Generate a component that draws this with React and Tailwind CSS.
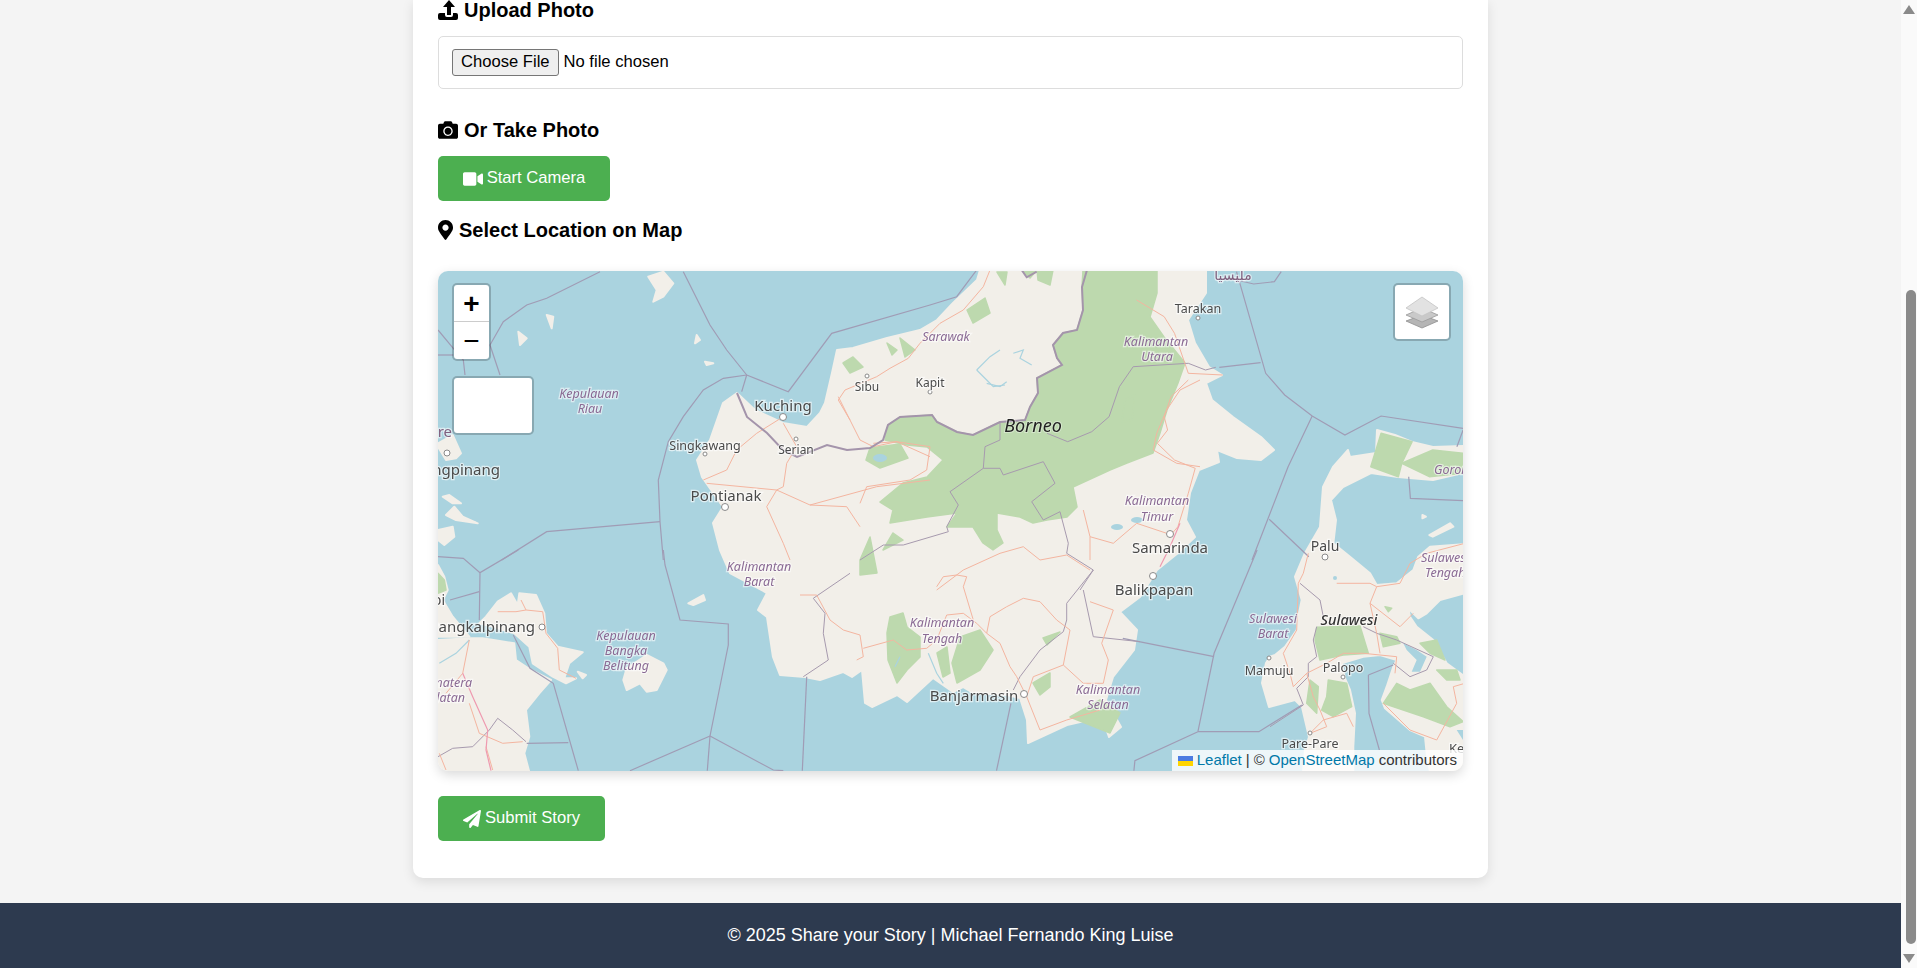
import React from 'react';
import { FaCamera, FaVideo, FaMapMarkerAlt, FaPaperPlane } from 'react-icons/fa';

// crop-space helper: the map was traced on zoomed crops, from an origin in page pixels.
// the crops starting at x=930 came back 2.904x wide instead of 3x
const z = (ox, oy, list) => list.map(([x, y]) => [ox + x / (ox === 930 ? 2.904 : 3), oy + y / 3]);
const str = (list) => list.map(([x, y]) => `${x.toFixed(1)},${y.toFixed(1)}`).join(' ');

const BORNEO = [[737,393],[755,410],[783,423],[807,427],[820,413],[825,403],[832,373],[837,350],[853,348],[887,338],[920,330],[937,320],[953,303],[977,280],[980,270],[1206,270],[1206,293],[1188,320],[1195,343],[1209,367],[1222,375],[1206,383],[1212,400],[1233,417],[1261,437],[1274,450],[1261,460],[1237,458],[1217,450],[1219,462],[1199,470],[1190,493],[1186,520],[1195,537],[1178,553],[1157,570],[1140,597],[1120,612],[1137,630],[1134,650],[1113,677],[1106,700],[1121,727],[1109,737],[1102,717],[1067,725],[1028,743],[1027,720],[1020,698],[1007,695],[973,693],[963,687],[953,692],[933,678],[907,702],[897,695],[872,707],[865,703],[862,670],[852,677],[843,672],[820,680],[805,677],[780,675],[773,657],[767,617],[758,610],[767,593],[730,573],[720,550],[713,523],[723,507],[702,477],[697,460],[710,440],[723,403]];

const SULAWESI = [[1463,446],[1433,447],[1412,442],[1395,435],[1377,430],[1376,453],[1350,457],[1348,450],[1333,467],[1323,487],[1320,527],[1305,553],
  ...z(1270,540,[[75,110],[95,180],[85,230],[80,270],[45,320],[15,345],[0,350]]),
  [1266,663],[1262,683],[1269,707],[1295,700],[1302,707],[1309,737],[1305,750],[1303,772],
  ...z(1270,540,[[250,696],[250,620],[255,520],[240,450],[225,415],[215,370],[280,350],[330,345],[380,360],[370,380],[350,440],[335,480],[345,505],[420,570],[465,590],[470,640],[480,696]]),
  [1463,772],
  ...z(1270,540,[[585,410],[530,370],[490,300],[440,260],[420,230],[415,205],[425,215],[445,235],[470,220],[510,180],[585,160],[585,12],[480,20],[445,50],[430,90],[380,130],[320,135],[300,100],[240,50],[190,10]]),
  [1336,520],[1331,500],[1343,487],[1371,473],[1398,477],[1433,480],[1463,473]];

const LAND = [
  z(436,420,[[6,660],[100,655],[140,655],[235,670],[240,720],[285,750],[345,780],[310,820],[270,870],[280,950],[265,1000],[280,1056],[6,1056]]),
  z(436,420,[[185,545],[225,520],[245,555],[250,520],[300,525],[325,580],[330,640],[365,680],[440,697],[400,730],[385,775],[420,775],[390,790],[350,770],[290,730],[280,680],[235,640],[170,620],[130,610],[150,590]]),
  z(436,420,[[6,435],[25,470],[35,510],[20,540],[50,590],[100,650],[6,650]]),
  z(436,420,[[30,285],[55,260],[80,290],[125,310],[95,305],[60,300]]),
  z(436,420,[[6,330],[50,320],[55,350],[25,375],[6,360]]),
  z(436,420,[[20,230],[40,225],[75,250],[50,250]]),
  z(436,420,[[425,755],[450,765],[440,775]]),
  z(436,420,[[6,70],[50,45],[75,100],[60,115],[30,120],[6,80]]),
  z(430,550,[[590,355],[650,315],[700,340],[710,360],[680,420],[650,425],[630,400],[590,420],[580,390]]),
  z(430,550,[[775,160],[820,135],[825,150],[790,165]]),
  z(430,260,[[655,50],[700,35],[730,70],[700,110],[670,125],[680,90]]),
  z(430,260,[[800,225],[810,240],[795,250]]),
  z(430,260,[[265,215],[290,235],[270,255]]),
  z(430,260,[[350,165],[370,170],[365,205]]),
  z(430,260,[[825,305],[850,310],[830,315]]),
  z(930,260,[[1430,765],[1440,770],[1430,775]]),
  z(930,260,[[1450,825],[1510,790],[1520,800],[1460,830]]),
];

const FOREST = [
  [[1083,270],[1157,270],[1157,293],[1150,317],[1164,337],[1185,363],[1178,383],[1167,410],[1160,433],[1153,453],[1127,463],[1110,470],[1073,487],[1077,507],[1067,517],[1047,520],[1033,523],[1020,517],[997,513],[997,530],[1003,543],[993,550],[983,543],[973,527],[947,527],[957,513],[927,517],[890,523],[893,510],[880,502],[903,483],[927,477],[943,460],[927,447],[907,445],[885,440],[888,425],[900,417],[932,415],[937,422],[957,432],[973,435],[1000,422],[1025,420],[1030,407],[1038,393],[1037,378],[1062,365],[1057,358],[1053,345],[1063,333],[1077,330],[1083,310],[1082,287]],
  [[860,560],[870,537],[877,573],[860,575]],
  [[893,533],[903,540],[883,550]],
  [[890,617],[903,613],[907,627],[920,637],[920,657],[907,670],[897,683],[888,660],[887,633]],
  [[960,637],[980,630],[993,650],[980,670],[957,683],[952,663],[957,647]],
  [[937,653],[947,647],[950,673],[943,677]],
  [[1033,683],[1050,673],[1050,687],[1040,695]],
  [[1070,717],[1100,700],[1120,713],[1110,733]],
  [[1043,638],[1060,632],[1047,645]],
  [[967,310],[985,298],[990,313],[973,323]],
  [[997,272],[1007,272],[1005,285]],
  [[1037,270],[1053,270],[1050,285],[1038,280]],
  [[1022,270],[1037,270],[1030,278]],
  [[853,357],[863,367],[850,373],[843,363]],
  [[887,343],[897,350],[892,355]],
  [[900,338],[915,350],[905,357]],
  [[870,448],[900,444],[908,458],[880,468],[866,460]],
  [[1125,400],[1135,395],[1132,420],[1122,422]],
  z(930,260,[[1280,620],[1310,520],[1400,545],[1370,610],[1360,650]]),
  z(930,260,[[1370,610],[1460,570],[1548,580],[1548,640],[1450,650]]),
  z(1270,540,[[140,262],[270,258],[295,340],[220,345],[150,360],[135,300]]),
  z(1270,540,[[175,420],[230,430],[245,500],[190,530],[155,510],[170,470]]),
  z(1270,540,[[330,280],[380,290],[390,310],[340,320]]),
  z(1270,540,[[450,310],[500,300],[525,360],[480,340]]),
  z(1270,540,[[500,390],[560,390],[570,420],[530,420]]),
  z(1270,540,[[340,490],[380,430],[420,450],[480,430],[530,500],[580,545],[540,560],[460,530],[400,510]]),
  z(1270,540,[[120,420],[145,440],[140,520],[110,490]]),
  z(1270,540,[[345,200],[365,205],[355,215]]),
  z(436,420,[[6,460],[25,480],[30,510],[6,520]]),
];

const SEA_BORDERS = [
  z(430,260,[[510,35],[350,115],[290,135],[220,185],[180,255],[210,345]]),
  z(430,260,[[24,210],[70,265],[100,300],[105,345]]),
  z(430,260,[[24,285],[70,285]]),
  z(430,260,[[760,35],[840,195],[890,270],[950,345]]),
  z(430,260,[[950,345],[935,395]]),
  z(430,260,[[950,345],[880,355],[820,390],[760,470],[715,545],[685,660],[690,785],[700,900]]),
  z(430,260,[[950,345],[1075,395],[1205,220],[1500,135],[1580,110],[1640,30]]),
  z(430,260,[[690,785],[350,815],[215,900]]),
  z(430,550,[[700,0],[705,45],[750,210],[895,222],[895,285],[840,558]]),
  z(430,550,[[840,558],[600,662]]),
  z(430,550,[[840,558],[832,662]]),
  z(430,550,[[840,558],[1030,660],[1060,662]]),
  z(430,550,[[1130,380],[1117,662]]),
  z(430,550,[[265,0],[150,68],[148,210]]),
  z(430,550,[[24,20],[100,25],[150,68]]),
  z(430,550,[[148,125],[60,150]]),
  z(430,550,[[250,255],[300,355],[370,400],[445,662]]),
  z(430,550,[[290,580],[415,578]]),
  z(930,260,[[890,35],[975,340],[1030,405],[1110,468],[1205,525],[1310,468],[1548,505]]),
  z(930,260,[[1110,468],[1040,620],[935,900]]),
  z(930,260,[[960,308],[840,322]]),
  z(930,260,[[985,778],[1100,890]]),
  z(930,260,[[1020,35],[1000,65],[940,72],[890,60]]),
  z(930,260,[[1548,510],[1530,560]]),
  z(930,260,[[1390,650],[1395,715],[1548,722]]),
  z(930,550,[[950,0],[825,310],[778,545]]),
  z(930,550,[[825,320],[560,265]]),
  z(930,550,[[778,545],[955,545],[1080,465]]),
  z(930,550,[[778,545],[595,632],[592,662]]),
  z(930,550,[[235,460],[193,662]]),
  z(930,550,[[1273,375],[1345,345]]),
  z(930,550,[[1273,375],[1275,490],[1305,600]]),
];

const NATIONAL = [
  [[737,393],[747,417],[767,433],[783,450],[797,457],[827,445],[847,450],[870,448],[883,440],[888,425],[900,417],[932,415],[937,422],[957,432],[973,435],[1000,422],[1025,420],[1030,407],[1038,393],[1037,378],[1062,365],[1057,358],[1053,345],[1063,333],[1077,330],[1083,310],[1082,287],[1087,270]],
  z(820,270,[[605,0],[620,22],[650,5]]),
];

const PROVINCE = [
  z(930,260,[[830,322],[800,330],[750,310],[590,320],[550,380],[520,470],[470,515],[400,545],[340,520]]),
  z(860,380,[[420,125],[420,180],[375,200],[370,265],[270,335],[295,375],[260,440],[265,455],[130,495],[70,495],[0,540]]),
  z(860,380,[[370,265],[420,265],[430,285],[550,245],[585,310],[515,365],[550,420],[600,395],[625,490],[620,520],[700,570],[660,630]]),
  z(800,570,[[880,0],[800,100],[800,150],[790,185],[720,240],[660,320],[640,360]]),
  z(800,570,[[850,60],[880,200],[1020,215]]),
  z(800,570,[[10,320],[85,270],[70,190],[75,130],[40,85],[150,10]]),
  z(1270,540,[[90,130],[150,180],[160,230]]),
  z(1270,540,[[280,260],[320,280],[380,300],[490,350],[470,390],[420,410],[370,370]]),
  z(1270,540,[[140,260],[130,300],[140,350],[115,370],[115,410],[80,445],[100,495],[0,560]]),
  z(436,420,[[6,1010],[50,985],[110,980],[160,930],[185,895],[230,930],[270,965]]),
];

const ROADS = [
  z(800,570,[[0,75],[50,75],[90,150],[130,180],[180,195],[190,260],[170,270]]),
  z(800,570,[[190,235],[280,210],[320,240],[380,235],[410,210],[440,135],[490,130],[530,160],[560,190],[600,220],[630,290],[650,320],[680,380],[720,480],[800,450],[900,420]]),
  z(800,570,[[560,190],[570,140],[620,110],[670,85],[720,95],[770,150],[810,180],[790,285]]),
  z(800,570,[[790,285],[700,320],[680,380]]),
  z(800,570,[[790,285],[850,340],[910,340],[925,270],[905,220],[940,120],[870,95]]),
  z(800,570,[[470,15],[500,20],[490,50],[520,150]]),
  z(800,570,[[410,50],[430,20],[470,15]]),
  z(860,380,[[0,370],[20,320],[150,300],[200,270],[210,200],[110,185],[40,190]]),
  z(860,380,[[230,630],[310,570],[420,520],[490,500],[540,540],[620,525],[690,570]]),
  z(860,380,[[880,210],[950,250],[1020,260]]),
  z(860,380,[[670,390],[690,470],[760,490],[830,430],[920,460]]),
  z(860,380,[[880,210],[890,160],[920,90],[960,30],[1020,0]]),
  z(860,380,[[690,470],[690,540]]),
  z(430,260,[[820,660],[890,630],[920,570],[980,520],[1060,470]]),
  z(430,260,[[1060,490],[1100,560],[1070,610],[1060,680],[1040,690]]),
  z(430,260,[[830,670],[1040,690],[1140,735],[1250,740],[1290,800]]),
  z(430,260,[[1040,690],[1010,740],[1060,850],[1080,900]]),
  z(430,260,[[1140,735],[1340,680],[1500,660]]),
  z(430,260,[[1225,410],[1290,540],[1330,560],[1400,545],[1500,590]]),
  z(820,270,[[90,450],[55,390],[75,360],[170,320],[210,295],[265,265],[300,220],[360,160],[430,120],[490,50],[510,0]]),
  z(930,260,[[600,120],[680,170],[710,220],[750,340],[850,345]]),
  z(930,260,[[750,360],[700,410],[680,470],[690,510],[660,550],[710,600],[770,625],[750,700],[720,800],[695,830]]),
  z(1270,540,[[115,40],[100,100],[85,130],[80,270],[40,340],[60,400],[70,440],[110,400],[170,370],[220,340],[280,340],[380,350],[375,400]]),
  z(1270,540,[[110,400],[130,470],[150,510],[170,560],[120,580],[160,540],[230,520],[250,560]]),
  z(1270,540,[[200,130],[300,130],[320,140],[300,190],[320,280],[330,340]]),
  z(1270,540,[[320,140],[390,130],[420,70],[470,40],[585,10]]),
  z(1270,540,[[300,190],[390,260],[430,220]]),
  z(1270,540,[[340,490],[420,570],[500,600],[560,490],[550,440],[585,430]]),
  z(436,420,[[30,820],[80,760],[100,660]]),
  z(436,420,[[10,1000],[30,1050]]),
  z(436,420,[[100,850],[130,940],[200,970],[260,965]]),
  z(436,420,[[150,980],[170,1050]]),
  z(436,420,[[185,575],[240,575],[270,570],[255,540]]),
  z(436,420,[[270,570],[320,575],[330,640],[365,685],[370,750],[420,775]]),
];

const TRUNK = [
  z(436,420,[[80,760],[110,830],[155,930],[150,990],[165,1052]]),
  z(860,380,[[900,560],[930,500],[960,430]]),
];

const RIVERS = [
  z(820,270,[[470,300],[510,260],[540,240]]),
  z(820,270,[[470,300],[500,330],[520,350],[555,345]]),
  z(820,270,[[580,250],[610,240],[600,265],[635,285]]),
  z(800,570,[[385,250],[410,310],[430,340]]),
  z(800,570,[[300,260],[285,290]]),
  z(436,420,[[10,730],[60,700],[100,660]]),
  z(860,380,[[380,10],[420,20],[440,5]]),
];

const LAKES = [[880,458,7,4],[1117,527,6,3],[1137,520,6,3],[1381,661,2,3],[1335,578,2,2]];

const CITY = [[783,417,3.5],[705,454,2],[796,439,2],[867,376,2],[930,392,2],[725,507,3.5],[447,453,3],[542,627,3],[1198,318,2],[1170,534,3.5],[1325,557,3],[1153,576,3.5],[1024,694,3.5],[1269,658,2],[1343,677,2],[1310,733,2]];

const cityText = 'fill-[#4a4a4a] stroke-[#ffffffa0] stroke-[2.5px] [paint-order:stroke] [font-family:"Noto_Sans",sans-serif]';
const stateText = 'fill-[#8a6a94] stroke-[#ffffff90] stroke-[2.5px] [paint-order:stroke] italic [font-family:"Noto_Sans",sans-serif]';

const CITY_LABELS = [
  ['Kuching', 783, 411, 15],
  ['Singkawang', 705, 450, 12.5],
  ['Serian', 796, 454, 12],
  ['Sibu', 867, 391, 12],
  ['Kapit', 930, 387, 12],
  ['Pontianak', 726, 501, 15],
  ['Tarakan', 1198, 313, 12.5],
  ['Samarinda', 1170, 553, 15],
  ['Palu', 1325, 551, 14],
  ['Balikpapan', 1154, 595, 15],
  ['Mamuju', 1269, 675, 12.5],
  ['Palopo', 1343, 672, 12.5],
  ['Pare-Pare', 1310, 748, 12.5],
  ['Banjarmasin', 974, 701, 15],
];

const STATE_LABELS = [
  ['Kepulauan', 589, 398], ['Riau', 590, 413],
  ['Sarawak', 946, 341],
  ['Kalimantan', 1156, 346], ['Utara', 1157, 361],
  ['Kalimantan', 1157, 505], ['Timur', 1157, 521],
  ['Sulawesi', 1273, 623], ['Barat', 1273, 638],
  ['Kalimantan', 759, 571], ['Barat', 759, 586],
  ['Kepulauan', 626, 640], ['Bangka', 626, 655], ['Belitung', 626, 670],
  ['Kalimantan', 942, 627], ['Tengah', 942, 643],
  ['Kalimantan', 1108, 694], ['Selatan', 1108, 709],
];

function MapDrawing() {
  return (
    <svg viewBox="438 271 1025 500" className="block w-full h-full blur-[0.35px]">
      <rect x="438" y="271" width="1025" height="500" fill="#aad3df" />
      {[BORNEO, SULAWESI, ...LAND].map((p, i) => (
        <polygon key={i} points={str(p)} fill="#f2efe9" stroke="#f2efe9" strokeWidth="2" strokeLinejoin="round" />
      ))}
      {FOREST.map((p, i) => (
        <polygon key={i} points={str(p)} fill="#bdd9ae" stroke="#bdd9ae" strokeWidth="1.5" strokeLinejoin="round" />
      ))}
      {LAKES.map(([cx, cy, rx, ry], i) => (
        <ellipse key={i} cx={cx} cy={cy} rx={rx} ry={ry} fill="#aad3df" />
      ))}
      <polygon points={str(z(1270, 540, [[400, 310], [440, 330], [470, 350], [450, 395], [425, 395], [440, 360], [410, 330]]))} fill="#aad3df" />
      <polygon points={str(z(1270, 540, [[560, 570], [585, 570], [585, 610]]))} fill="#aad3df" />
      {RIVERS.map((p, i) => (
        <polyline key={i} points={str(p)} fill="none" stroke="#aad3df" strokeWidth="1.2" />
      ))}
      {SEA_BORDERS.map((p, i) => (
        <polyline key={i} points={str(p)} fill="none" stroke="#a09cb5" strokeWidth="1.2" />
      ))}
      {PROVINCE.map((p, i) => (
        <polyline key={i} points={str(p)} fill="none" stroke="#a79aae" strokeWidth="1" />
      ))}
      {ROADS.map((p, i) => (
        <polyline key={i} points={str(p)} fill="none" stroke="#f4b5a0" strokeWidth="1" />
      ))}
      {TRUNK.map((p, i) => (
        <polyline key={i} points={str(p)} fill="none" stroke="#ef9ab0" strokeWidth="1.2" />
      ))}
      {NATIONAL.map((p, i) => (
        <polyline key={i} points={str(p)} fill="none" stroke="#a494ab" strokeWidth="2" />
      ))}
      {CITY.map(([cx, cy, r], i) => (
        <circle key={i} cx={cx} cy={cy} r={r} fill="#fff" stroke="#8a8a8a" strokeWidth="1" />
      ))}
      {CITY_LABELS.map(([t, x, y, s]) => (
        <text key={t} x={x} y={y} fontSize={s} textAnchor="middle" className={cityText}>{t}</text>
      ))}
      <text x="500" y="475" fontSize="15" textAnchor="end" className={cityText}>Tanjungpinang</text>
      <text x="535" y="632" fontSize="15" textAnchor="end" className={cityText}>Pangkalpinang</text>
      <text x="445" y="605" fontSize="14" textAnchor="end" className={cityText}>Jambi</text>
      <text x="1449" y="753" fontSize="13" className={cityText}>Kendari</text>
      {STATE_LABELS.map(([t, x, y], i) => (
        <text key={i} x={x} y={y} fontSize="12.5" textAnchor="middle" className={stateText}>{t}</text>
      ))}
      <text x="1421" y="562" fontSize="12.5" className={stateText}>Sulawesi</text>
      <text x="1425" y="577" fontSize="12.5" className={stateText}>Tengah</text>
      <text x="1434" y="474" fontSize="12.5" className={stateText}>Gorontalo</text>
      <text x="472" y="687" fontSize="12.5" textAnchor="end" className={stateText}>Sumatera</text>
      <text x="465" y="702" fontSize="12.5" textAnchor="end" className={stateText}>Selatan</text>
      <text x="452" y="437" fontSize="15" textAnchor="end" className='fill-[#80607f] stroke-[#ffffff90] stroke-[2.5px] [paint-order:stroke] [font-family:"Noto_Sans",sans-serif]'>Singapore</text>
      <text x="1233" y="280" fontSize="14" textAnchor="middle" className='fill-[#80607f] stroke-[#ffffff90] stroke-[2.5px] [paint-order:stroke] [font-family:"DejaVu_Sans",sans-serif]'>مليسيا</text>
      <text x="1033" y="432" fontSize="18" textAnchor="middle" className='fill-[#222] stroke-[#ffffff60] stroke-[2px] [paint-order:stroke] italic [font-family:"Noto_Sans",sans-serif]'>Borneo</text>
      <text x="1349" y="625" fontSize="14.5" textAnchor="middle" className='fill-[#333] stroke-[#ffffff90] stroke-[2px] [paint-order:stroke] italic font-medium [font-family:"Noto_Sans",sans-serif]'>Sulawesi</text>
    </svg>
  );
}

function UploadIcon() {
  return (
    <svg viewBox="0 0 20 20" className="w-[20px] h-[20px]" fill="currentColor">
      <polygon points="11,0 17,7 13,7 13,15 9,15 9,7 5,7" />
      <path d="M2 13h5v2a2 2 0 0 0 2 2h4a2 2 0 0 0 2-2v-2h3a2 2 0 0 1 2 2v3a2 2 0 0 1-2 2H2a2 2 0 0 1-2-2v-3a2 2 0 0 1 2-2z" />
    </svg>
  );
}

function Heading({ icon, children, className }) {
  return (
    <h3 className={`flex items-center gap-[6px] h-[22px] text-[20px] font-bold text-black ${className}`}>
      {icon}
      <span>{children}</span>
    </h3>
  );
}

export default function App() {
  return (
    <div className='flex h-[968px] overflow-hidden bg-[#f4f4f4] font-["Liberation_Sans",Arial,sans-serif]'>
      <div className="flex-1 flex flex-col">
        {/* Form card */}
        <main className="flex-1">
          <div className="mx-auto -mt-[1px] w-[1075px] h-[879px] bg-white rounded-b-[10px] px-[25px] shadow-[0_4px_12px_rgba(0,0,0,0.1)]">
            <Heading icon={<UploadIcon />}>Upload Photo</Heading>
            <div className="mt-[15px] h-[53px] flex items-center px-[13px] border border-[#dddddd] rounded-[5px]">
              <input
                type="file"
                className="text-[16.6px] text-black file:text-[16.6px] file:h-[27px] file:px-[8px] file:mr-[5px] file:bg-[#efefef] file:border file:border-[#767676] file:rounded-[3px]"
              />
            </div>

            <Heading icon={<FaCamera className="w-[20px] h-[20px]" />} className="mt-[30px]">Or Take Photo</Heading>
            <button className="mt-[15px] h-[45px] w-[172px] flex items-center justify-center gap-[4px] bg-[#4caf50] text-white text-[16.6px] rounded-[5px]">
              <FaVideo className="w-[20px] h-[18px]" />
              Start Camera
            </button>

            <Heading icon={<FaMapMarkerAlt className="w-[15px] h-[20px]" />} className="mt-[18px]">Select Location on Map</Heading>

            {/* Map */}
            <div className="relative mt-[30px] h-[500px] rounded-[10px] overflow-hidden shadow-[0_4px_12px_rgba(0,0,0,0.15)]">
              <MapDrawing />
              <div className="absolute left-[14px] top-[12px] w-[39px] flex flex-col bg-white border-2 border-[#0003] bg-clip-padding rounded-[5px] font-['Liberation_Sans',sans-serif] text-[28px] leading-[37px] text-black text-center">
                <div className="h-[37px] border-b border-[#ccc] font-bold">+</div>
                <div className="h-[37px]">−</div>
              </div>
              <div className="absolute left-[14px] top-[105px] w-[82px] h-[59px] bg-white border-2 border-[#0003] bg-clip-padding rounded-[5px]" />
              <div className="absolute right-[12px] top-[12px] w-[58px] h-[58px] flex items-center justify-center bg-white border-2 border-[#0003] bg-clip-padding rounded-[5px]">
                <svg viewBox="0 0 34 34" className="w-[34px] h-[34px]">
                  <polygon points="17,20 33,26 17,33 1,26" fill="#b5b5b5" stroke="#8f8f8f" strokeWidth="0.8" />
                  <polygon points="17,13 33,20 17,27 1,20" fill="#c9c9c9" stroke="#9a9a9a" strokeWidth="0.8" />
                  <polygon points="17,2 33,13 17,21 1,13" fill="#e2e2e2" stroke="#c4c4c4" strokeWidth="0.8" />
                </svg>
              </div>
              <div className="absolute right-0 bottom-0 h-[21px] flex items-center gap-[4px] px-[6px] bg-[#ffffffcc] text-[15px] text-[#333]">
                <svg viewBox="0 0 12 8" className="w-[15px] h-[10px]">
                  <rect width="12" height="4" fill="#4c7be1" />
                  <rect y="4" width="12" height="4" fill="#ffd500" />
                </svg>
                <span className="text-[#0078a8]">Leaflet</span>
                <span>|</span>
                <span>©</span>
                <span className="text-[#0078a8]">OpenStreetMap</span>
                <span>contributors</span>
              </div>
            </div>

            <button className="mt-[25px] h-[45px] w-[167px] flex items-center justify-center gap-[4px] bg-[#4caf50] text-white text-[16.6px] rounded-[5px]">
              <FaPaperPlane className="w-[18px] h-[18px]" />
              Submit Story
            </button>
          </div>
        </main>

        <footer className="h-[65px] flex items-center justify-center bg-[#2d3a4f] text-white text-[18px]">
          © 2025 Share your Story | Michael Fernando King Luise
        </footer>
      </div>

      {/* Browser scrollbar */}
      <div className="w-[16px] bg-[#fafafa] flex flex-col items-center">
        <svg viewBox="0 0 12 9" className="mt-[5px] w-[12px] h-[9px] shrink-0"><polygon points="6,0 12,9 0,9" fill="#8a8a8a" /></svg>
        <div className="mt-[276px] ml-[4px] w-[10px] h-[654px] shrink-0 rounded-[5px] bg-[#8a8a8a]" />
        <svg viewBox="0 0 12 9" className="mt-[10px] w-[12px] h-[9px] shrink-0"><polygon points="0,0 12,0 6,9" fill="#8a8a8a" /></svg>
      </div>
    </div>
  );
}
